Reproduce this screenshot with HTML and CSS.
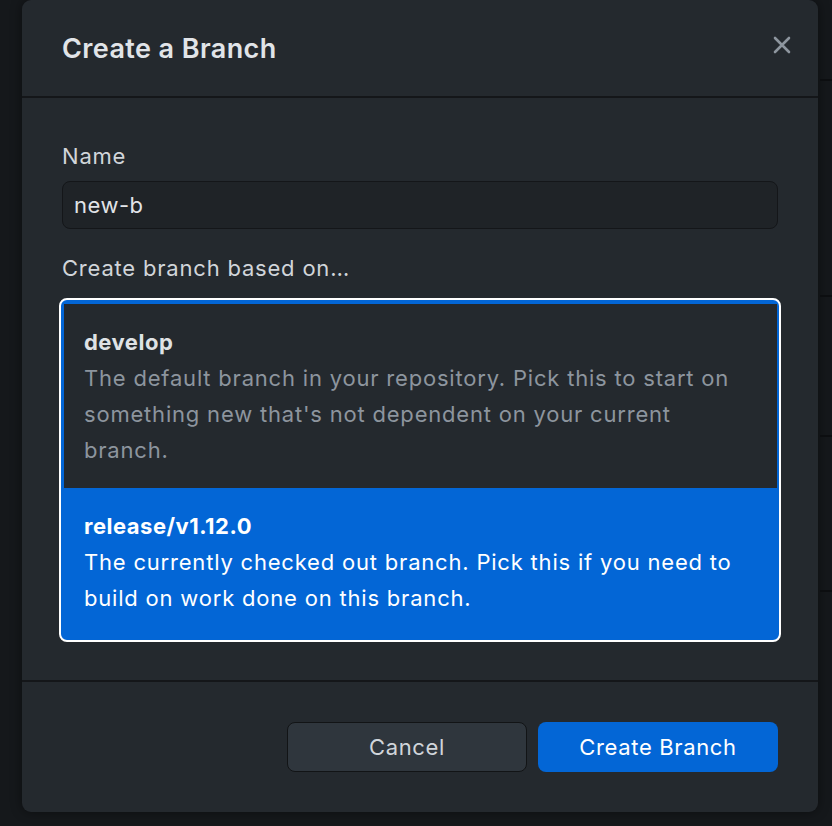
FILE: index.html
```html
<!DOCTYPE html>
<html lang="en">
<head>
<meta charset="utf-8">
<title>Create a Branch</title>
<link rel="stylesheet" href="styles.css">
</head>
<body>
<div class="screen">
  <div class="dialog">
    <header class="dialog-header">
      <h1 class="dialog-title">Create a Branch</h1>
      <button class="close-btn" aria-label="Close">
        <svg width="18" height="18" viewBox="0 0 18 18"><path d="M2 2 L16 16 M16 2 L2 16" stroke="currentColor" stroke-width="2.6" stroke-linecap="round" fill="none"/></svg>
      </button>
    </header>
    <div class="dialog-body">
      <label class="field-label">Name</label>
      <div class="text-input">new-b</div>
      <div class="field-label based-label">Create branch based on…</div>
      <div class="branch-list">
        <div class="branch-item">
          <div class="branch-name">develop</div>
          <div class="branch-desc">The default branch in your repository. Pick this to start on something new that's not dependent on your current branch.</div>
        </div>
        <div class="branch-item selected">
          <div class="branch-name">release/v1.12.0</div>
          <div class="branch-desc">The currently checked out branch. Pick this if you need to build on work done on this branch.</div>
        </div>
      </div>
    </div>
    <footer class="dialog-footer">
      <button class="btn btn-secondary">Cancel</button>
      <button class="btn btn-primary">Create Branch</button>
    </footer>
  </div>
  <div class="backdrop-strip">
    <div class="strip-row r1"></div>
    <div class="strip-row r2"></div>
    <div class="strip-row r3"></div>
    <div class="strip-row r4"></div>
  </div>
</div>
</body>
</html>
```
FILE: styles.css
```css
* { box-sizing: border-box; }
html, body {
  margin: 0;
  padding: 0;
  background: #15181b;
  font-family: Inter, "Noto Sans", "Liberation Sans", sans-serif;
  color: #d1d5da;
}
.screen {
  display: flex;
  align-items: flex-start;
  height: 826px;
  padding-left: 22px;
  overflow: hidden;
}
.dialog {
  width: 796px;
  height: 812px;
  flex: none;
  background: #24292e;
  border-radius: 9px;
  box-shadow: 0 0 12px rgba(0,0,0,0.45);
  display: flex;
  flex-direction: column;
}
.dialog-header {
  height: 98px;
  flex: none;
  display: flex;
  align-items: center;
  justify-content: space-between;
  padding: 0 27px 0 40px;
  border-bottom: 2px solid #141619;
}
.dialog-title {
  margin: 0;
  font-size: 27px;
  font-weight: 600;
  color: #e1e4e8;
  letter-spacing: 0.4px;
  padding-top: 1px;
}
.close-btn {
  background: none;
  border: 0;
  padding: 0;
  width: 18px;
  height: 18px;
  color: #8d959e;
  display: flex;
  margin-bottom: 6px;
}
.dialog-body {
  flex: 1;
  padding: 46px 40px 0;
  display: flex;
  flex-direction: column;
  letter-spacing: 0.8px;
}
.field-label {
  font-size: 22px;
  line-height: 24px;
  color: #d1d5da;
}
.text-input {
  margin-top: 13px;
  height: 48px;
  border: 1px solid #141619;
  background: #1f2327;
  border-radius: 8px;
  padding: 0 11px;
  font-size: 22px;
  line-height: 46px;
  color: #e1e4e8;
  letter-spacing: 0.5px;
}
.based-label {
  margin-top: 27px;
}
.branch-list {
  margin-top: 18px;
  margin-left: -3px;
  margin-right: -3px;
  border: 2px solid #ffffff;
  border-radius: 8px;
  background: #0366d6;
  padding: 4px 2px 0 3px;
  overflow: hidden;
}
.branch-item {
  padding: 20px 22px 20px 20px;
  font-size: 22px;
  line-height: 36px;
}
.branch-item:first-child {
  background: #24292e;
  height: 184px;
}
.branch-item.selected {
  height: 152px;
  color: #ffffff;
}
.branch-name {
  font-weight: 700;
  color: #dfe2e5;
  letter-spacing: 0.5px;
}
.branch-desc {
  color: #8d959e;
}
.selected .branch-name,
.selected .branch-desc {
  color: #ffffff;
}
.dialog-footer {
  flex: none;
  border-top: 2px solid #141619;
  padding: 40px 40px 40px;
  display: flex;
  justify-content: flex-end;
  gap: 11px;
}
.btn {
  width: 240px;
  height: 50px;
  border-radius: 8px;
  font-family: inherit;
  font-size: 22px;
  letter-spacing: 0.65px;
}
.btn-secondary {
  background: #2f363d;
  border: 1.5px solid #121416;
  color: #d1d5da;
}
.btn-primary {
  background: #0366d6;
  border: 0;
  color: #ffffff;
}
.backdrop-strip {
  flex: 1;
  margin-left: 2px;
  display: flex;
  flex-direction: column;
}
.strip-row {
  border-bottom: 2px solid #0c0e10;
}
.r1 { height: 81px; }
.r2 { height: 216px; }
.r3 { height: 140px; }
.r4 { height: 155px; }
```
